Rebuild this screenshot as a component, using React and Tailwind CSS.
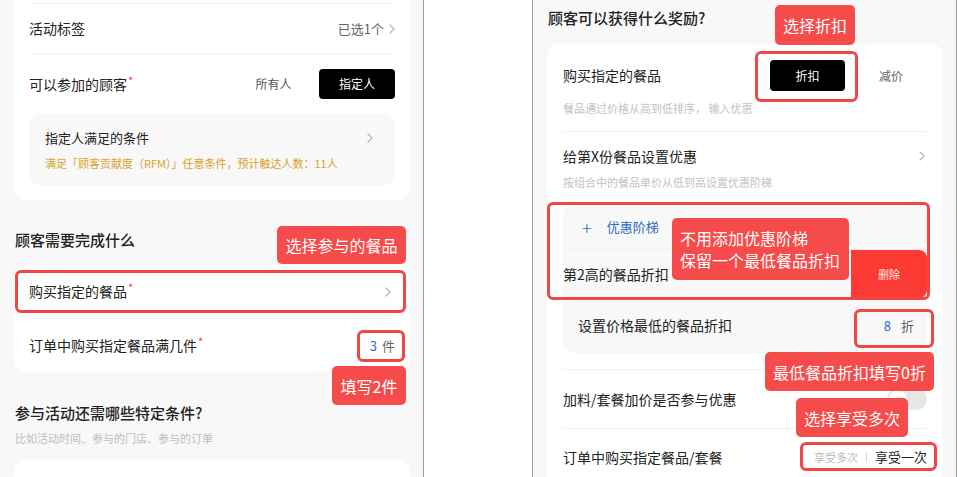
import React from 'react';

function Chevron({ className = '' }) {
  return (
    <svg width="6" height="10" viewBox="0 0 6 10" fill="none" className={className}>
      <path d="M1 1l4 4-4 4" stroke="#b5b5b5" strokeWidth="1.2" strokeLinecap="round" strokeLinejoin="round" />
    </svg>
  );
}

function Star() {
  return <span className="relative -top-[5px] ml-[1px] text-[11px] text-[#f03c3c]">*</span>;
}

function Note({ className = '', children }) {
  return (
    <div
      className={`absolute flex items-center rounded-[5px] bg-[#f54c4b] text-[16px] leading-[22px] text-white ${className}`}
    >
      {children}
    </div>
  );
}

function Outline({ className = '' }) {
  return <div className={`absolute rounded-[6px] border-[3px] border-[#f04646] ${className}`} />;
}

function LeftPanel() {
  return (
    <div className="relative h-[477px] w-[424px] shrink-0 overflow-hidden border-r border-[#9c9c9c] bg-[#f8f8f8] pl-[14px] pr-[13px]">
      <div className="rounded-b-[12px] bg-white px-[15px] pb-[15px] pt-[3px]">
        <div className="flex h-[51px] items-center justify-between border-y border-[#f1f1f1]">
          <span className="text-[14px] text-[#222]">活动标签</span>
          <span className="flex items-center gap-[5px] text-[13px] text-[#666]">
            已选1个
            <Chevron />
          </span>
        </div>
        <div className="flex h-[60px] items-center">
          <span className="text-[14px] text-[#222]">
            可以参加的顾客
            <Star />
          </span>
          <span className="ml-auto w-[76px] pr-[15px] text-center text-[12px] text-[#555]">所有人</span>
          <span className="flex h-[30px] w-[76px] items-center justify-center rounded-[4px] bg-black text-[12px] text-white">
            指定人
          </span>
        </div>
        <div className="relative h-[71px] rounded-[12px] bg-[#f8f8f8] px-[16px] pt-[15px]">
          <div className="flex items-center justify-between pr-[6px]">
            <span className="text-[13px] leading-[18px] text-[#222]">指定人满足的条件</span>
            <Chevron />
          </div>
          <p className="mt-[8px] text-[11px] leading-[16px] text-[#dca22c]">
            满足「顾客贡献度（RFM）」任意条件，预计触达人数：11人
          </p>
        </div>
      </div>

      <h3 className="ml-[1px] pb-[15px] pt-[30px] text-[15px] font-medium leading-[20px] text-[#222]">顾客需要完成什么</h3>

      <div className="rounded-[12px] bg-white px-[15px]">
        <div className="flex h-[54px] items-center justify-between border-b border-[#f1f1f1]">
          <span className="text-[14px] text-[#222]">
            购买指定的餐品
            <Star />
          </span>
          <Chevron className="mr-[4px]" />
        </div>
        <div className="flex h-[53px] items-center justify-between">
          <span className="text-[14px] text-[#222]">
            订单中购买指定餐品满几件
            <Star />
          </span>
          <span className="flex items-center gap-[5px] text-[13px]">
            <span className="text-[#2f6bc4]">3</span>
            <span className="text-[#666]">件</span>
          </span>
        </div>
      </div>

      <h3 className="ml-[1px] pt-[31px] text-[15px] font-medium leading-[20px] text-[#222]">参与活动还需哪些特定条件?</h3>
      <p className="ml-[1px] mt-[7px] text-[11px] leading-[16px] text-[#bdbdbd]">比如活动时间、参与的门店、参与的订单</p>
      <div className="mt-[14px] h-[60px] rounded-[12px] bg-white" />

      <Note className="left-[277px] top-[226px] h-[38px] w-[129px] justify-center">选择参与的餐品</Note>
      <Outline className="left-[15px] top-[270px] h-[43px] w-[391px]" />
      <Outline className="left-[357px] top-[330px] h-[32px] w-[48px]" />
      <Note className="left-[332px] top-[366px] h-[39px] w-[74px] justify-center">填写2件</Note>
    </div>
  );
}

function RightPanel() {
  return (
    <div className="relative h-[477px] w-[425px] shrink-0 overflow-hidden border-x border-[#9c9c9c] bg-[#f8f8f8] pl-[14px] pr-[13px]">
      <h3 className="ml-[1px] pt-[8px] text-[15px] font-medium leading-[20px] text-[#222]">顾客可以获得什么奖励?</h3>

      <div className="mt-[16px] h-[460px] rounded-[12px] bg-white px-[16px]">
        <div className="border-b border-[#f1f1f1] pb-[15px] pt-[16px]">
          <div className="flex h-[31px] items-center">
            <span className="text-[14px] text-[#222]">购买指定的餐品</span>
            <span className="ml-auto flex h-[31px] w-[75px] items-center justify-center rounded-[4px] bg-black text-[12px] text-white">
              折扣
            </span>
            <span className="w-[82px] pl-[10px] text-center text-[12px] text-[#666]">减价</span>
          </div>
          <p className="mt-[9px] text-[11px] leading-[16px] text-[#c2c2c2]">餐品通过价格从高到低排序， 输入优惠</p>
        </div>

        <div className="pt-[14px]">
          <div className="flex h-[20px] items-center justify-between">
            <span className="text-[14px] text-[#222]">给第X份餐品设置优惠</span>
            <Chevron className="mr-[2px]" />
          </div>
          <p className="mt-[8px] text-[11px] leading-[16px] text-[#c2c2c2]">按组合中的餐品单价从低到高设置优惠阶梯</p>
        </div>

        <div className="mt-[14px] overflow-hidden rounded-[12px] bg-[#f8f8f8]">
          <div className="flex h-[46px] items-center gap-[15px] border-b border-[#eeeeee] pl-[19px] text-[#2f6bc4]">
            <span className="text-[18px] font-light leading-none">+</span>
            <span className="text-[13px]">优惠阶梯</span>
          </div>
          <div className="flex h-[48px] items-stretch">
            <div className="flex flex-1 items-center whitespace-nowrap">
              <span className="text-[14px] text-[#222]">第2高的餐品折扣</span>
            </div>
            <div className="flex w-[76px] items-center justify-center rounded-r-[8px] bg-[#fb3a33] text-[11px] text-[#ffe6e6]">
              删除
            </div>
          </div>
          <div className="flex h-[55px] items-center justify-between pl-[15px] pr-[13px]">
            <span className="text-[14px] text-[#222]">设置价格最低的餐品折扣</span>
            <span className="flex items-center gap-[10px] text-[13px]">
              <span className="text-[#2f6bc4]">8</span>
              <span className="text-[#666]">折</span>
            </span>
          </div>
        </div>

        <div className="mt-[16px] flex h-[60px] items-center justify-between border-y border-[#f1f1f1]">
          <span className="text-[14px] text-[#222]">加料/套餐加价是否参与优惠</span>
          <span className="flex h-[22px] w-[40px] items-center rounded-full bg-[#e6e6e6] px-[2px]">
            <span className="h-[18px] w-[18px] rounded-full bg-white" />
          </span>
        </div>
        <div className="flex h-[56px] items-center justify-between">
          <span className="text-[14px] text-[#222]">订单中购买指定餐品/套餐</span>
          <span className="flex items-center gap-[8px]">
            <span className="text-[11px] text-[#bbbbbb]">享受多次</span>
            <span className="h-[10px] w-px bg-[#d6d6d6]" />
            <span className="text-[13px] text-[#222]">享受一次</span>
          </span>
        </div>
      </div>

      <Note className="left-[242px] top-[5px] h-[40px] w-[80px] justify-center">选择折扣</Note>
      <Outline className="left-[222px] top-[51px] h-[51px] w-[103px]" />
      <Outline className="left-[14px] top-[202px] h-[98px] w-[383px]" />
      <Note className="left-[139px] top-[218px] h-[62px] w-[177px] pl-[8px]">
        <span>
          不用添加优惠阶梯
          <br />
          保留一个最低餐品折扣
        </span>
      </Note>
      <Outline className="left-[321px] top-[309px] h-[39px] w-[80px]" />
      <Note className="left-[232px] top-[352px] h-[39px] w-[169px] justify-center">最低餐品折扣填写0折</Note>
      <Note className="left-[263px] top-[398px] h-[39px] w-[112px] justify-center">选择享受多次</Note>
      <Outline className="left-[267px] top-[442px] h-[29px] w-[137px]" />
    </div>
  );
}

export default function App() {
  return (
    <div className="flex h-[477px] w-[958px] overflow-hidden bg-white font-['Noto_Sans_CJK_SC',sans-serif]">
      <LeftPanel />
      <div className="w-[108px] shrink-0 bg-white" />
      <RightPanel />
    </div>
  );
}
